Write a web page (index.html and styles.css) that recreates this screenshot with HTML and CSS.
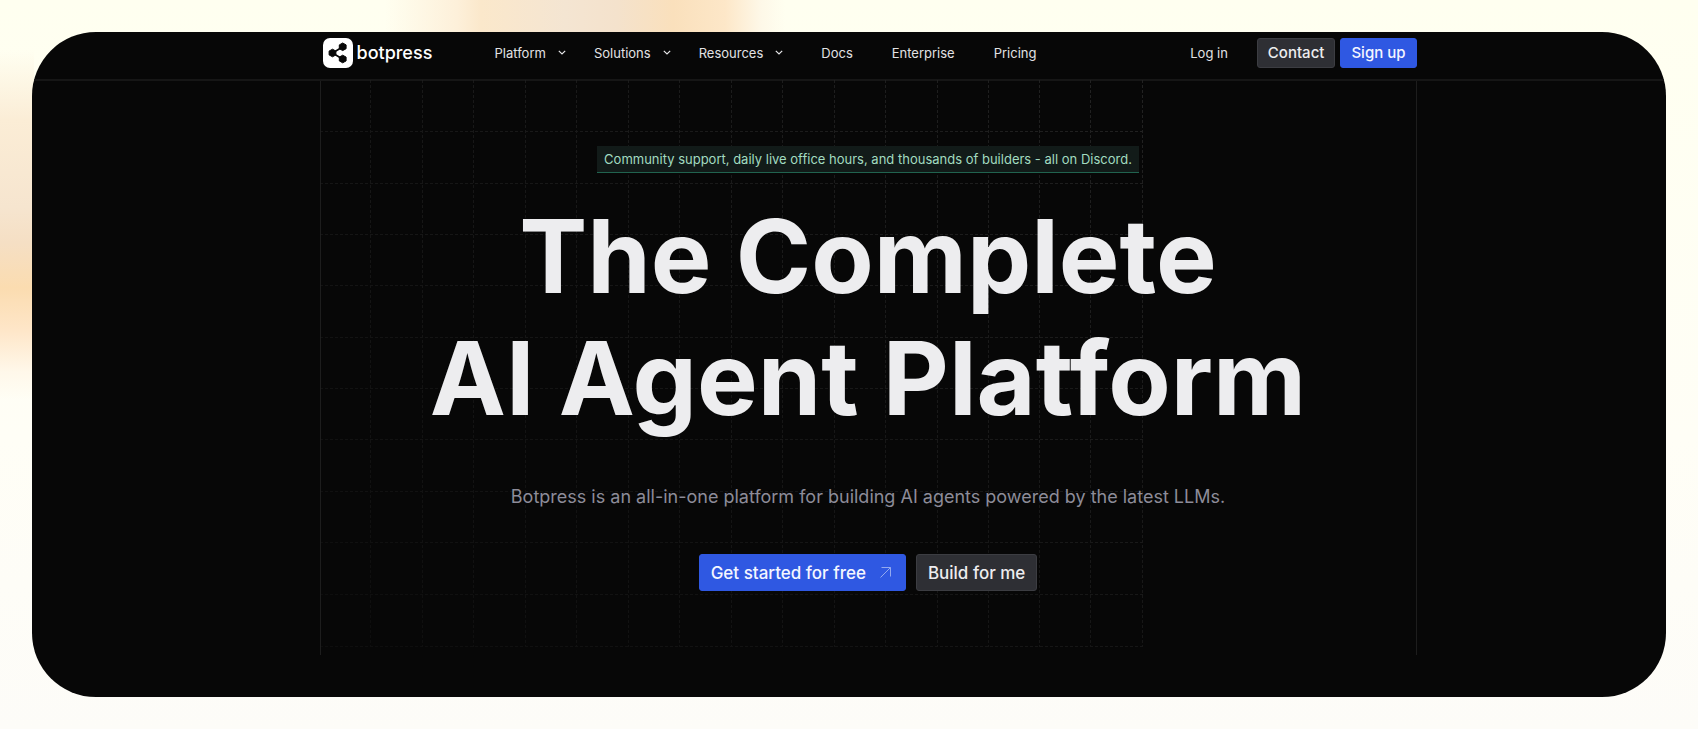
FILE: index.html
```html
<!DOCTYPE html>
<html lang="en">
<head>
<meta charset="utf-8">
<meta name="viewport" content="width=device-width, initial-scale=1">
<title>Botpress</title>
<link rel="stylesheet" href="styles.css">
</head>
<body>
<div class="panel">
  <header class="header">
    <div class="container bar">
      <a class="logo" href="#">
        <svg class="logo-mark" viewBox="0 0 30 30" aria-hidden="true">
          <rect width="30" height="30" rx="7" fill="#fff"/>
          <path d="M9.500 15 19.500 9M9.500 15l10 6" stroke="#070707" stroke-width="1.600" fill="none"/>
          <path d="M9.500 11.200l3.400 1.900v3.800l-3.400 1.900-3.400-1.900v-3.800zM19.700 5l3.400 1.900v3.800l-3.400 1.900-3.400-1.900V6.900zM19.700 17.200l3.400 1.900v3.800l-3.400 1.900-3.400-1.900v-3.800z" fill="#070707" stroke="#070707" stroke-width="1" stroke-linejoin="round"/>
        </svg>
        <span>botpress</span>
      </a>
      <nav class="nav">
        <button class="nav-item" type="button">Platform<svg class="chevron" viewBox="0 0 8 5" aria-hidden="true"><path d="M.8.8 4 4 7.200.8"/></svg></button>
        <button class="nav-item" type="button">Solutions<svg class="chevron" viewBox="0 0 8 5" aria-hidden="true"><path d="M.8.8 4 4 7.200.8"/></svg></button>
        <button class="nav-item" type="button">Resources<svg class="chevron" viewBox="0 0 8 5" aria-hidden="true"><path d="M.8.8 4 4 7.200.8"/></svg></button>
      </nav>
      <nav class="nav nav-links">
        <a class="nav-item" href="#">Docs</a>
        <a class="nav-item" href="#">Enterprise</a>
        <a class="nav-item" href="#">Pricing</a>
      </nav>
      <div class="account">
        <a class="nav-item login" href="#">Log in</a>
        <a class="button button-dark" href="#">Contact</a>
        <a class="button button-blue" href="#">Sign up</a>
      </div>
    </div>
  </header>
  <main class="main">
    <section class="container hero">
      <svg class="grid" viewBox="0 0 823 567" preserveAspectRatio="xMinYMin" aria-hidden="true">
        <path d="M50.500 0v567M102.500 0v567M153.500 0v567M205.500 0v567M256.500 0v567M308.500 0v567M359.500 0v567M411.500 0v567M462.500 0v567M514.500 0v567M565.500 0v567M617.500 0v567M668.500 0v567M719.500 0v567M770.500 0v567M822.500 0v567M0 51.500h823M0 103.500h823M0 154.500h823M0 205.500h823M0 257.500h823M0 308.500h823M0 359.500h823M0 411.500h823M0 462.500h823M0 514.500h823M0 566.500h823"/>
      </svg>
      <a class="notice" href="#">Community support, daily live office hours, and thousands of builders - all on Discord.</a>
      <h1 class="title">The Complete<br>AI Agent Platform</h1>
      <p class="lead">Botpress is an all-in-one platform for building AI agents powered by the latest LLMs.</p>
      <div class="actions">
        <a class="button button-blue large" href="#">Get started for free<svg class="arrow" viewBox="0 0 11 11" aria-hidden="true"><path d="M.5 10.500l10-10M1.500.5h9v9"/></svg></a>
        <a class="button button-dark large" href="#">Build for me</a>
      </div>
    </section>
  </main>
</div>
</body>
</html>
```
FILE: styles.css
```css
* { box-sizing: border-box; }

body {
  margin: 0;
  min-height: 100vh;
  padding: 32px;
  display: flex;
  font-family: Inter, "Liberation Sans", sans-serif;
  background:
    linear-gradient(to right, #fef8e600, #fdf0da 18%, #fbe8cb 24%, #f4e5d2 45%, #f4e2cc 58%, #fae0bc 72%, #fde7c8 85%, #fef8e8 94%, #fffff000) 385px 0 / 400px 34px no-repeat,
    linear-gradient(#fffff000, #fbedd6 20%, #f6e5cf 45%, #f5dfc4 55%, #fbdcb0 68%, #fee6c8 80%, #fff8ea 92%, #fffef600) 0 50px / 34px 350px no-repeat,
    linear-gradient(#fffff0, #fffef6 60%, #fdfcf8);
}

a { color: inherit; text-decoration: none; }

.panel {
  flex: 1;
  min-width: 0;
  border-radius: 64px;
  overflow: hidden;
  background: #070707;
  color: #ededef;
}

.header {
  height: 49px;
  padding-left: 38px;
  border-bottom: 2px solid #161616;
}

.main { padding-left: 38px; }

.container { max-width: 1097px; margin: 0 auto; }

.bar {
  height: 41px;
  display: flex;
  align-items: center;
  padding-left: 3px;
}

.logo {
  display: flex;
  align-items: center;
  gap: 4px;
  width: 172px;
  font-size: 18px;
  font-weight: 500;
  color: #fff;
}

.logo-mark { width: 30px; height: 30px; }

.nav { display: flex; gap: 28px; }

.nav-links { gap: 39px; margin-left: 38px; }

.nav-item {
  display: flex;
  align-items: center;
  gap: 12px;
  padding: 0;
  border: 0;
  background: none;
  font: 400 13px/20px Inter, "Liberation Sans", sans-serif;
  color: #e2e2e4;
}

.chevron, .arrow { fill: none; stroke: currentColor; }

.chevron { width: 8px; height: 5px; stroke-width: 1.2; }

.account { display: flex; align-items: center; gap: 5px; margin-left: auto; }

.login { margin-right: 24px; }

.button {
  display: flex;
  align-items: center;
  height: 30px;
  padding: 0 10px;
  border: 1px solid;
  border-radius: 3px;
  font-size: 15px;
  font-weight: 500;
  line-height: 20px;
}

.button-dark { background: #2e2f34; border-color: #3c3d42; color: #ededef; }

.button-blue { background: #2f58e2; border-color: #2f58e2; color: #f4f6ff; }

.hero {
  position: relative;
  display: flex;
  flex-direction: column;
  align-items: center;
  height: 574px;
  padding-top: 65px;
  border: solid #1d1d1d;
  border-width: 0 1px;
}

.grid {
  position: absolute;
  top: -1px;
  left: -1px;
  width: 823px;
  max-width: 100%;
  fill: none;
  stroke: #222;
  stroke-dasharray: 3 2;
  -webkit-mask-image: linear-gradient(to top right, #0004, #0009 50%, #000);
  mask-image: linear-gradient(to top right, #0004, #0009 50%, #000);
}

.notice, .title, .lead, .actions { position: relative; }

.notice {
  padding: 3px 7px;
  border-bottom: 1px solid #21634f;
  background: #121b19;
  color: #a2dcc0;
  font-size: 13px;
  line-height: 20px;
}

.title {
  margin: 22px 0 0;
  font-size: 102px;
  font-weight: 700;
  line-height: 122px;
  text-align: center;
}

.lead {
  margin: 44px 0 0;
  font-size: 18px;
  line-height: 28px;
  color: #8d8c99;
}

.actions { display: flex; gap: 10px; margin-top: 43px; }

.large { height: 37px; padding: 0 11px; font-size: 17px; }

.arrow { width: 11px; height: 11px; margin: 0 3px 0 14px; color: #93a9ef; }
```
